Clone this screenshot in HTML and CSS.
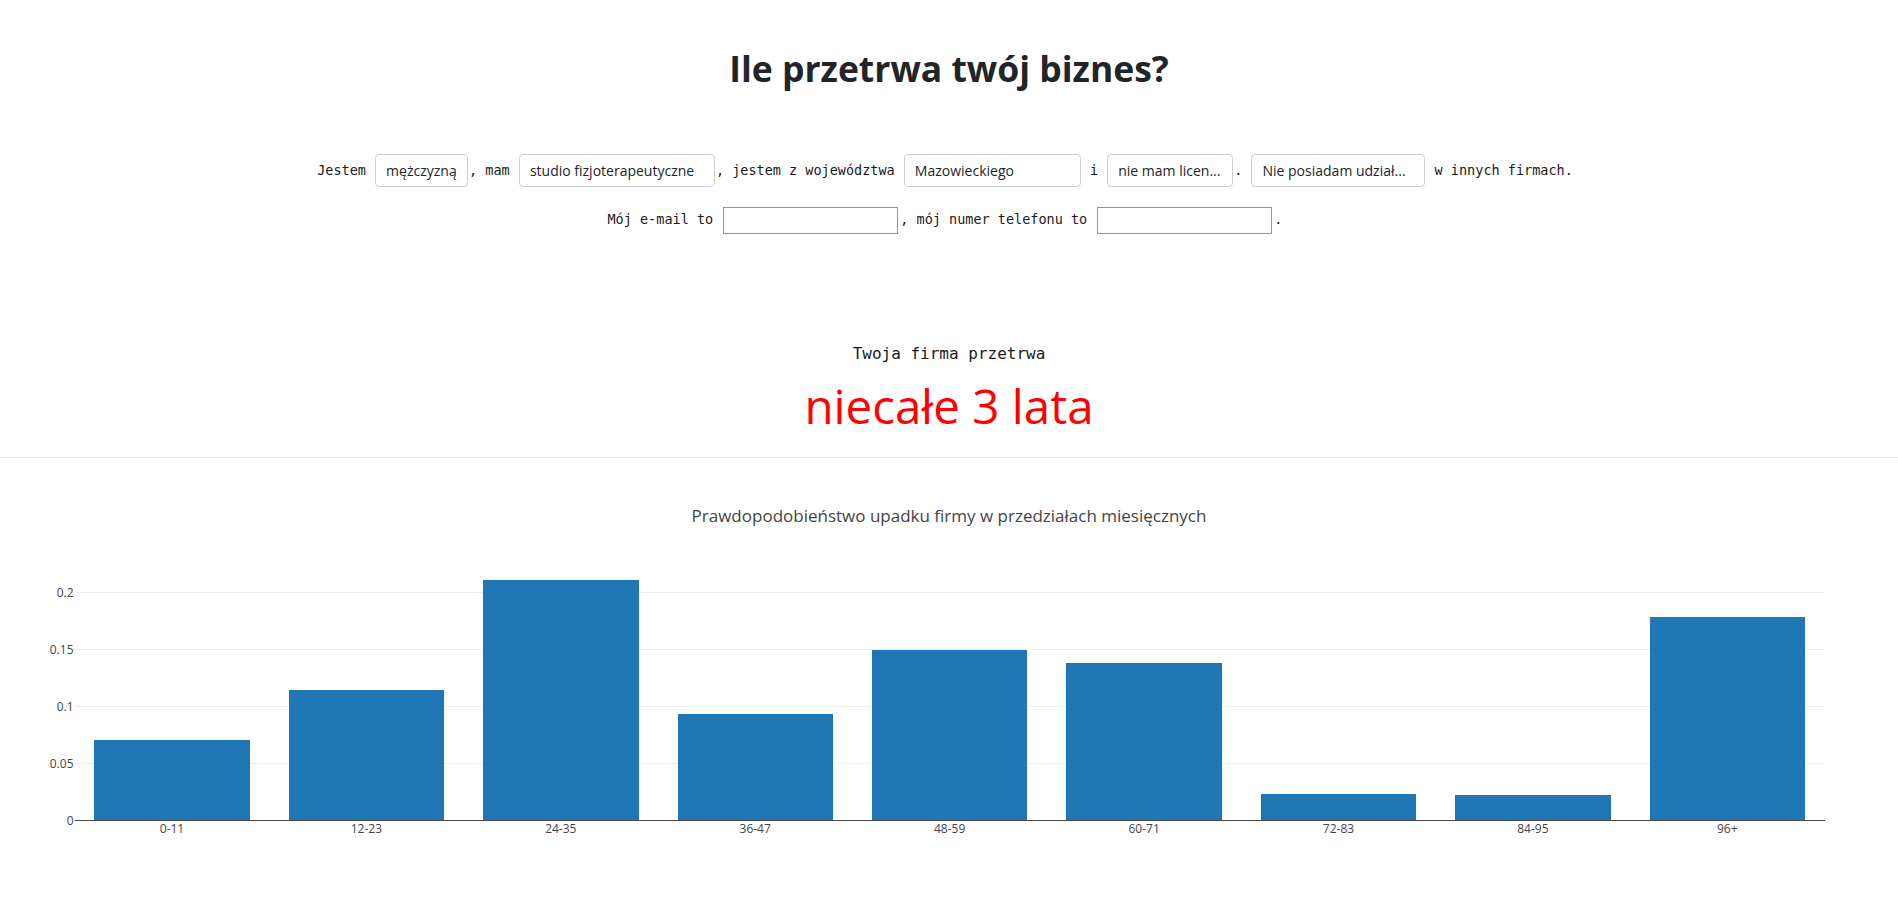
FILE: index.html
```html
<!DOCTYPE html>
<html lang="pl">
<head>
<meta charset="utf-8">
<title>Ile przetrwa twój biznes?</title>
<link rel="stylesheet" href="styles.css">
</head>
<body>
<main class="page">
  <h1 class="title">Ile przetrwa twój biznes?</h1>
  <form class="quiz">
    <p class="row">Jestem <span class="pick pick-sex">mężczyzną</span>, mam <span class="pick pick-biz">studio fizjoterapeutyczne</span>, jestem z województwa <span class="pick pick-region">Mazowieckiego</span> i <span class="pick pick-license">nie mam licen...</span>. <span class="pick pick-shares">Nie posiadam udział...</span> w innych firmach.</p>
    <p class="row row-contact">Mój e-mail to <input class="field" type="text" aria-label="e-mail">, mój numer telefonu to <input class="field" type="text" aria-label="telefon">.</p>
  </form>
  <section class="result">
    <p class="lead">Twoja firma przetrwa</p>
    <p class="verdict">niecałe 3 lata</p>
  </section>
  <hr class="divider">
  <svg class="chart" width="1898" height="445" viewBox="0 0 1898 445" xmlns="http://www.w3.org/2000/svg">
    <text class="chart-title" x="949" y="63" text-anchor="middle">Prawdopodobieństwo upadku firmy w przedziałach miesięcznych</text>
    <g class="grid" shape-rendering="crispEdges">
      <rect x="75" y="132.8" width="1750" height="1"/>
      <rect x="75" y="189.8" width="1750" height="1"/>
      <rect x="75" y="246.8" width="1750" height="1"/>
      <rect x="75" y="303.8" width="1750" height="1"/>
    </g>
    <g class="ylabels" text-anchor="end">
      <text x="73.5" y="137.5">0.2</text>
      <text x="73.5" y="194.5">0.15</text>
      <text x="73.5" y="251.5">0.1</text>
      <text x="73.5" y="308.5">0.05</text>
      <text x="73.5" y="365.5">0</text>
    </g>
    <g class="bars" shape-rendering="crispEdges">
      <rect x="94.3" y="281" width="155.4" height="80.3"/>
      <rect x="288.7" y="231" width="155.4" height="130.3"/>
      <rect x="483.1" y="121.3" width="155.4" height="240"/>
      <rect x="677.5" y="255.3" width="155.4" height="106"/>
      <rect x="871.9" y="191.4" width="155.4" height="169.9"/>
      <rect x="1066.4" y="204.3" width="155.4" height="157"/>
      <rect x="1260.8" y="335" width="155.4" height="26.3"/>
      <rect x="1455.2" y="335.7" width="155.4" height="25.6"/>
      <rect x="1649.6" y="157.7" width="155.4" height="203.6"/>
    </g>
    <rect class="zeroline" x="75" y="360.8" width="1750" height="1" shape-rendering="crispEdges"/>
    <g class="xlabels" text-anchor="middle">
      <text x="172" y="374">0-11</text>
      <text x="366.4" y="374">12-23</text>
      <text x="560.8" y="374">24-35</text>
      <text x="755.2" y="374">36-47</text>
      <text x="949.6" y="374">48-59</text>
      <text x="1144.1" y="374">60-71</text>
      <text x="1338.5" y="374">72-83</text>
      <text x="1532.9" y="374">84-95</text>
      <text x="1727.3" y="374">96+</text>
    </g>
  </svg>
</main>
</body>
</html>
```

FILE: styles.css
```css
html, body {
  margin: 0;
  padding: 0;
  background: #ffffff;
}

.page {
  color: #212529;
  font-family: "Open Sans", "Noto Sans", sans-serif;
}

.title {
  margin: 47px 0 0;
  font-family: "Open Sans", "Noto Sans", sans-serif;
  font-weight: 700;
  font-size: 35.5px;
  line-height: 1.2;
  text-align: center;
  color: #212529;
}

.quiz {
  margin: 64px 0 0;
}

.row {
  margin: 0;
  padding-right: 8px;
  text-align: center;
  font-family: "DejaVu Sans Mono", monospace;
  font-size: 13.5px;
  line-height: 33px;
  color: #1a1a1a;
}

.row-contact {
  margin-top: 16px;
}

.pick {
  display: inline-block;
  box-sizing: border-box;
  height: 33px;
  margin: 0 1px;
  padding: 0 10px;
  border: 1px solid #cfcfcf;
  border-radius: 4px;
  vertical-align: middle;
  font-family: "Open Sans", "Noto Sans", sans-serif;
  font-size: 14px;
  line-height: 31px;
  text-align: left;
  white-space: nowrap;
  overflow: hidden;
  text-overflow: ellipsis;
  color: #212529;
  background: #ffffff;
}

.pick-sex { width: 93px; }
.pick-biz { width: 196px; }
.pick-region { width: 177px; }
.pick-license { width: 126px; }
.pick-shares { width: 174px; }

.field {
  box-sizing: border-box;
  width: 175px;
  height: 27px;
  margin: 0 2px;
  padding: 1px 2px;
  border: 1px solid #949494;
  border-radius: 0;
  vertical-align: middle;
  font-family: "Liberation Sans", sans-serif;
  font-size: 13px;
  background: #ffffff;
}

.result {
  margin-top: 106px;
  text-align: center;
}

.lead {
  margin: 0;
  font-family: "DejaVu Sans Mono", monospace;
  font-size: 16px;
  line-height: 24px;
  color: #1a1a1a;
}

.verdict {
  margin: 11px 0 0;
  font-family: "Open Sans", "Noto Sans", sans-serif;
  font-weight: 400;
  font-size: 47.5px;
  line-height: 57px;
  color: #ff0000;
}

.divider {
  margin: 22.5px 0 0;
  height: 0;
  border: 0;
  border-top: 1px solid #e6e6e6;
}

.chart {
  display: block;
  margin-top: 1px;
}

.chart-title {
  font-family: "Open Sans", sans-serif;
  font-size: 17px;
  fill: #444444;
}

.grid rect {
  fill: #eeeeee;
}

.bars rect {
  fill: #1f77b4;
}

.zeroline {
  fill: #444444;
}

.ylabels text,
.xlabels text {
  font-family: "Open Sans", sans-serif;
  font-size: 12px;
  fill: #444444;
}
```
